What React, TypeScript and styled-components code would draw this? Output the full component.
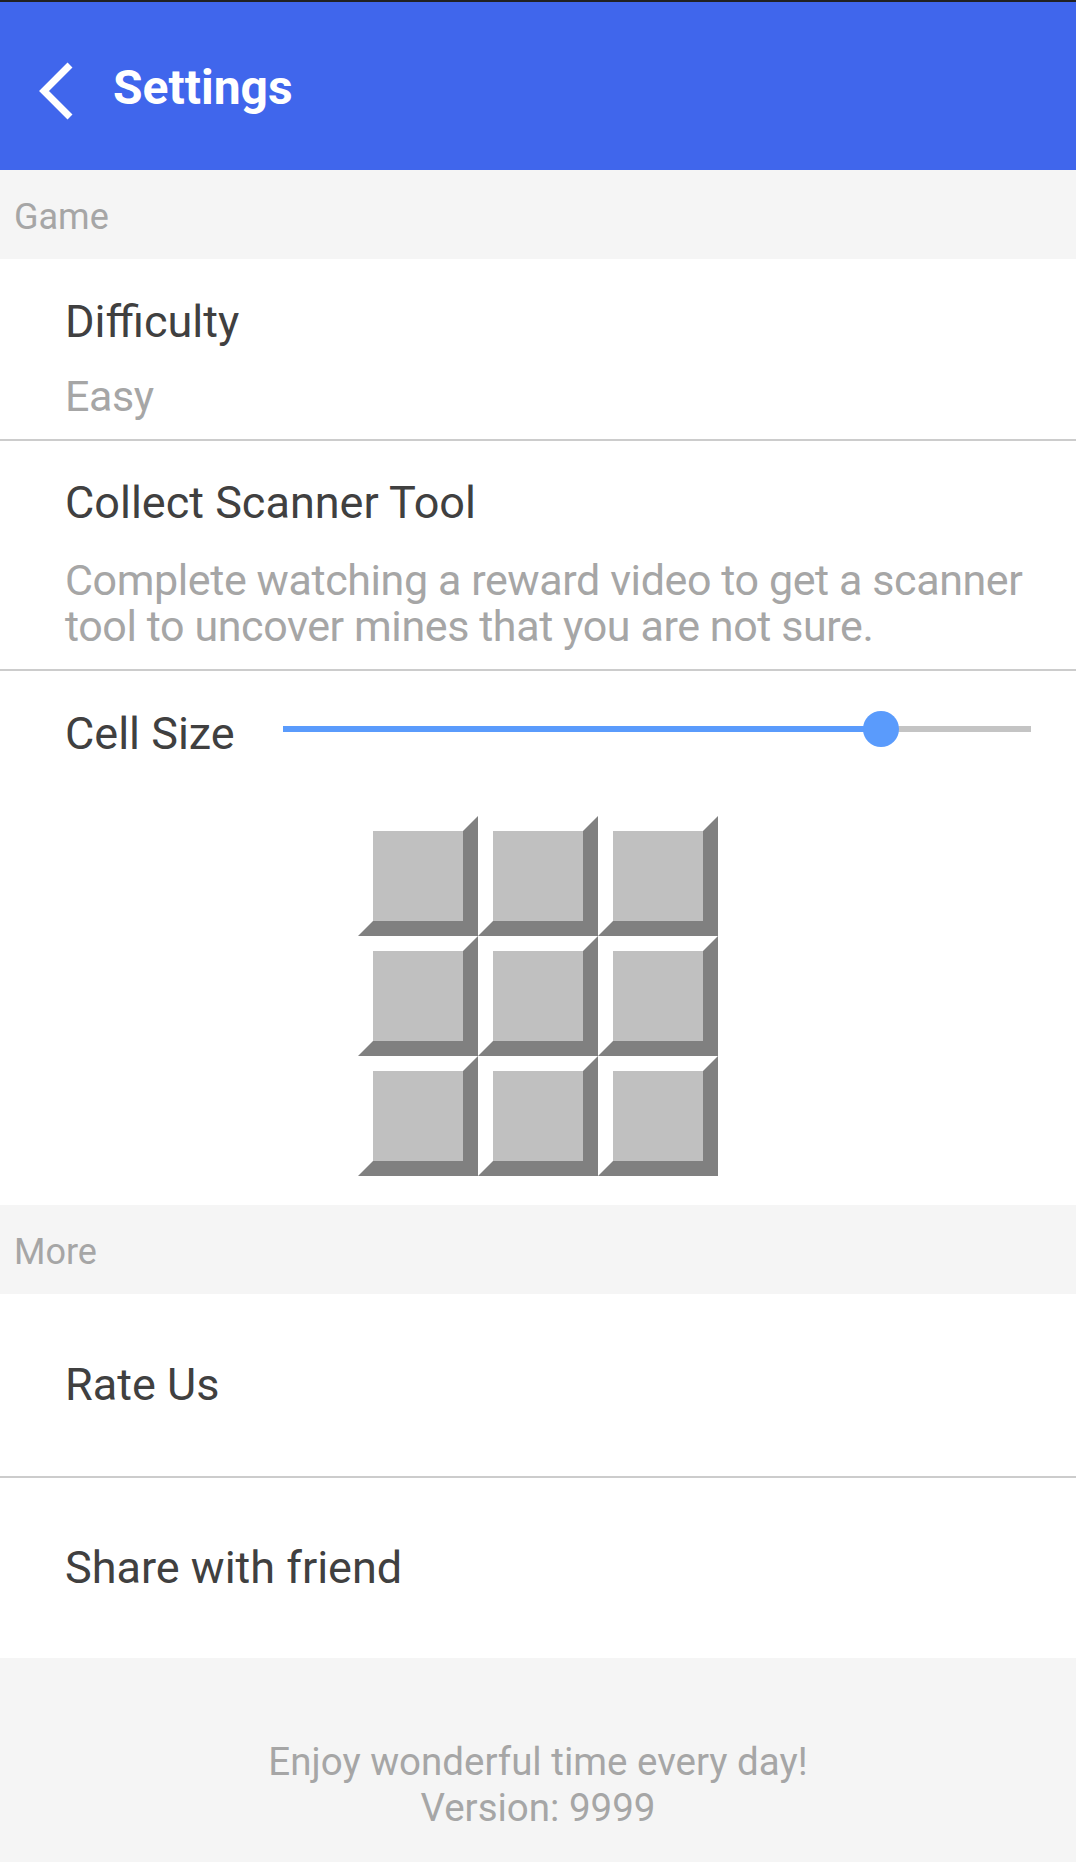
import React from 'react';
import styled, { createGlobalStyle } from 'styled-components';

const GlobalStyle = createGlobalStyle`
  html, body {
    margin: 0;
    padding: 0;
    background: #ffffff;
  }
  * {
    box-sizing: border-box;
  }
`;

const Screen = styled.div`
  width: 1076px;
  font-family: Roboto, 'Noto Sans', sans-serif;
  border-top: 2px solid #212121;
`;

const TopBar = styled.div`
  height: 168px;
  background: #4066ec;
  display: flex;
  align-items: center;
  padding: 4px 0 0 36px;
  gap: 37px;
`;

const BackButton = styled.svg`
  width: 40px;
  height: 70px;
  flex: none;
  margin-top: -4px;
`;

const TopTitle = styled.h1`
  margin: 0;
  color: #ffffff;
  font-size: 48px;
  font-weight: 700;
  line-height: 56px;
`;

const SectionHeader = styled.div`
  height: 89px;
  background: #f5f5f5;
  color: #a6a6a6;
  font-size: 36px;
  line-height: 42px;
  padding: 26px 0 0 14px;
`;

const Row = styled.div<{ $height: number; $top?: number; $center?: boolean }>`
  height: ${(p) => p.$height}px;
  background: #ffffff;
  padding: ${(p) => (p.$center ? 0 : p.$top ?? 0)}px 24px 0 65px;
  display: flex;
  flex-direction: column;
  justify-content: ${(p) => (p.$center ? 'center' : 'flex-start')};
`;

const Divider = styled.div`
  height: 2px;
  background: #cccccc;
`;

const Title = styled.div`
  color: #404040;
  font-size: 45px;
  line-height: 52px;
  white-space: nowrap;
`;

const Summary = styled.div<{ $gap: number }>`
  color: #a6a6a6;
  font-size: 43px;
  line-height: 46px;
  letter-spacing: -0.4px;
  margin-top: ${(p) => p.$gap}px;
`;

const SliderRow = styled.div`
  display: flex;
  align-items: center;
  padding-right: 21px;
`;

const SliderBox = styled.div`
  position: relative;
  width: 748px;
  height: 36px;
  margin-left: auto;
  margin-bottom: 11px;
  display: flex;
  align-items: center;
`;

const Track = styled.div`
  position: relative;
  width: 100%;
  height: 6px;
  background: #c4c4c4;
`;

const TrackFill = styled.div`
  height: 100%;
  background: #5a9bfc;
`;

const Thumb = styled.div`
  position: absolute;
  top: 0;
  width: 36px;
  height: 36px;
  margin-left: -18px;
  border-radius: 50%;
  background: #5a9bfc;
`;

const CellGrid = styled.div`
  align-self: center;
  margin: 56px 0 0 -41px;
  display: grid;
  grid-template-columns: repeat(3, 120px);
  grid-template-rows: repeat(3, 120px);
`;

const Cell = styled.div`
  width: 120px;
  height: 120px;
  background: #c0c0c0;
  border: 15px solid;
  border-color: #ffffff #808080 #808080 #ffffff;
`;

const Footer = styled.div`
  height: 204px;
  background: #f5f5f5;
  color: #a6a6a6;
  font-size: 38.5px;
  line-height: 46px;
  text-align: center;
  padding-top: 81px;
`;

function CellSizeSlider({ value }: { value: number }) {
  const pct = `${value * 100}%`;
  return (
    <SliderBox>
      <Track>
        <TrackFill style={{ width: pct }} />
      </Track>
      <Thumb style={{ left: pct }} />
    </SliderBox>
  );
}

export default function App() {
  return (
    <Screen>
      <GlobalStyle />
      <TopBar>
        <BackButton viewBox="0 0 40 70">
          <polyline points="34,14 8,40 34,66" fill="none" stroke="#ffffff" strokeWidth="7" />
        </BackButton>
        <TopTitle>Settings</TopTitle>
      </TopBar>

      <SectionHeader>Game</SectionHeader>
      <Row $height={180} $top={37}>
        <Title>Difficulty</Title>
        <Summary $gap={25}>Easy</Summary>
      </Row>
      <Divider />
      <Row $height={228} $top={36}>
        <Title>Collect Scanner Tool</Title>
        <Summary $gap={28}>
          Complete watching a reward video to get a scanner tool to uncover mines that you are not sure.
        </Summary>
      </Row>
      <Divider />
      <Row $height={534} $top={37}>
        <SliderRow>
          <Title>Cell Size</Title>
          <CellSizeSlider value={0.8} />
        </SliderRow>
        <CellGrid>
          {Array.from({ length: 9 }).map((_, i) => (
            <Cell key={i} />
          ))}
        </CellGrid>
      </Row>

      <SectionHeader>More</SectionHeader>
      <Row $height={182} $center>
        <Title>Rate Us</Title>
      </Row>
      <Divider />
      <Row $height={180} $center>
        <Title>Share with friend</Title>
      </Row>

      <Footer>
        Enjoy wonderful time every day!
        <br />
        Version: 9999
      </Footer>
    </Screen>
  );
}
